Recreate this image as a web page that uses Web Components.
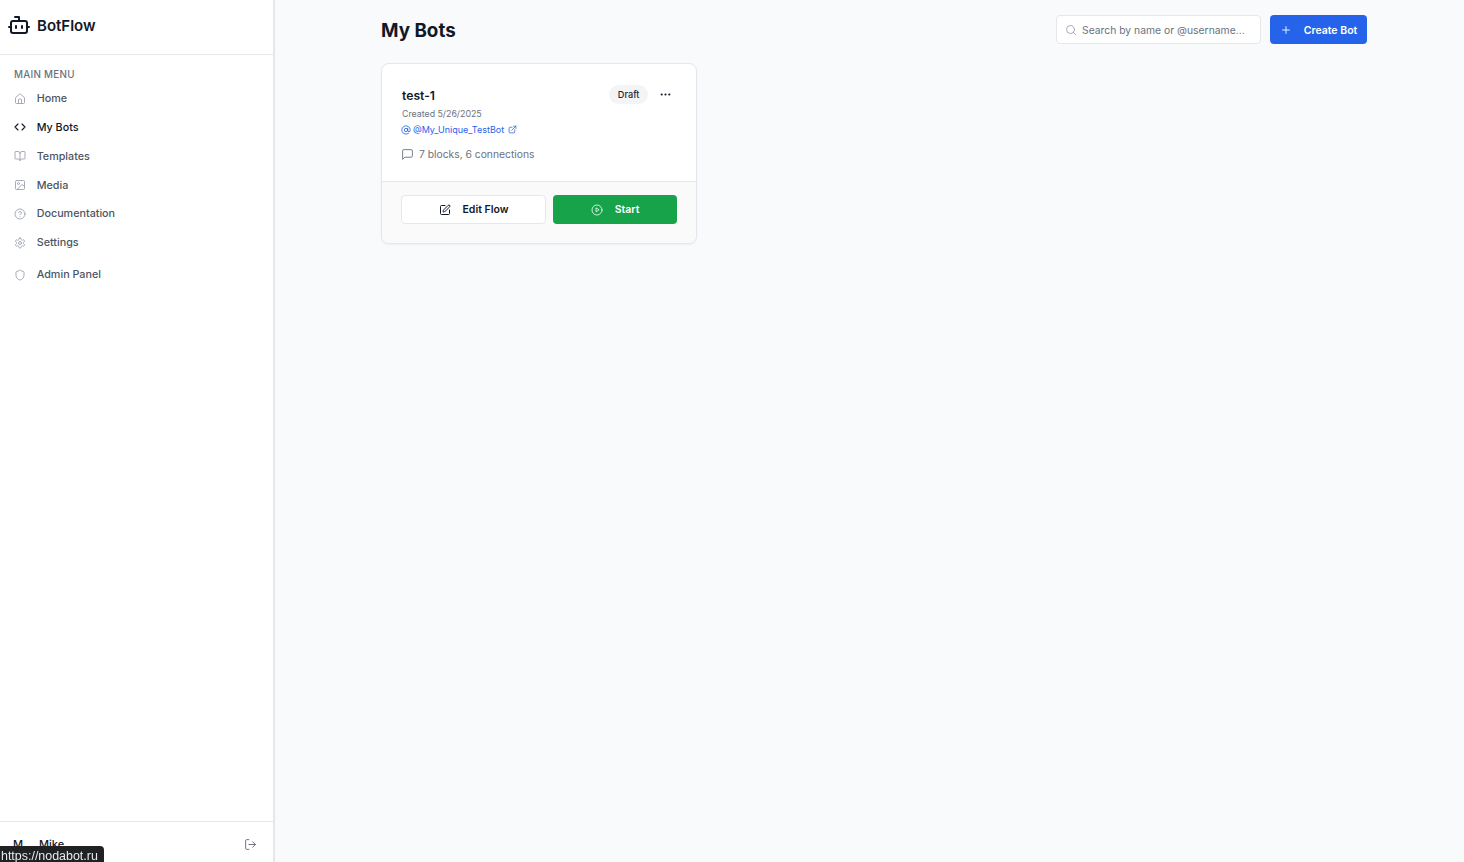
<!DOCTYPE html>
<html lang="en">
<head>
<meta charset="utf-8">
<title>My Bots - BotFlow</title>
<style>
  html, body { margin: 0; height: 100%; }
  body { font-family: Inter, "Noto Sans", sans-serif; background: #f9fafb; overflow: hidden; }
</style>
</head>
<body>
<app-shell>
  <side-bar slot="side"></side-bar>
  <bots-page slot="main"></bots-page>
</app-shell>
<status-tip>https://nodabot.ru</status-tip>

<script>
const icons = {
  bot: '<path d="M12 8V4H8"/><rect x="4" y="8" width="16" height="12" rx="2"/><path d="M2 14h2M20 14h2M15 13v2M9 13v2"/>',
  home: '<path d="M15 21v-8a1 1 0 0 0-1-1h-4a1 1 0 0 0-1 1v8"/><path d="M3 10a2 2 0 0 1 .709-1.528l7-5.999a2 2 0 0 1 2.582 0l7 5.999A2 2 0 0 1 21 10v9a2 2 0 0 1-2 2H5a2 2 0 0 1-2-2z"/>',
  code: '<path d="m16 18 6-6-6-6M8 6l-6 6 6 6"/>',
  book: '<path d="M12 7v14"/><path d="M3 18a1 1 0 0 1-1-1V4a1 1 0 0 1 1-1h5a4 4 0 0 1 4 4 4 4 0 0 1 4-4h5a1 1 0 0 1 1 1v13a1 1 0 0 1-1 1h-6a3 3 0 0 0-3 3 3 3 0 0 0-3-3z"/>',
  image: '<rect x="3" y="3" width="18" height="18" rx="2"/><circle cx="9" cy="9" r="2"/><path d="m21 15-3.086-3.086a2 2 0 0 0-2.828 0L6 21"/>',
  help: '<circle cx="12" cy="12" r="10"/><path d="M9.09 9a3 3 0 0 1 5.83 1c0 2-3 3-3 3M12 17h.01"/>',
  gear: '<path d="M12.22 2h-.44a2 2 0 0 0-2 2v.18a2 2 0 0 1-1 1.73l-.43.25a2 2 0 0 1-2 0l-.15-.08a2 2 0 0 0-2.73.73l-.22.38a2 2 0 0 0 .73 2.73l.15.1a2 2 0 0 1 1 1.72v.51a2 2 0 0 1-1 1.74l-.15.09a2 2 0 0 0-.73 2.73l.22.38a2 2 0 0 0 2.73.73l.15-.08a2 2 0 0 1 2 0l.43.25a2 2 0 0 1 1 1.73V20a2 2 0 0 0 2 2h.44a2 2 0 0 0 2-2v-.18a2 2 0 0 1 1-1.73l.43-.25a2 2 0 0 1 2 0l.15.08a2 2 0 0 0 2.73-.73l.22-.39a2 2 0 0 0-.73-2.73l-.15-.08a2 2 0 0 1-1-1.74v-.5a2 2 0 0 1 1-1.74l.15-.09a2 2 0 0 0 .73-2.73l-.22-.38a2 2 0 0 0-2.73-.73l-.15.08a2 2 0 0 1-2 0l-.43-.25a2 2 0 0 1-1-1.73V4a2 2 0 0 0-2-2z"/><circle cx="12" cy="12" r="3"/>',
  shield: '<path d="M20 13c0 5-3.5 7.5-7.66 8.95a1 1 0 0 1-.67-.01C7.5 20.5 4 18 4 13V6a1 1 0 0 1 1-1c2 0 4.5-1.2 6.24-2.72a1.17 1.17 0 0 1 1.52 0C14.51 3.81 17 5 19 5a1 1 0 0 1 1 1z"/>',
  logout: '<path d="M9 21H5a2 2 0 0 1-2-2V5a2 2 0 0 1 2-2h4"/><path d="m16 17 5-5-5-5M21 12H9"/>',
  search: '<circle cx="11" cy="11" r="8"/><path d="m21 21-4.3-4.3"/>',
  plus: '<path d="M5 12h14M12 5v14"/>',
  at: '<circle cx="12" cy="12" r="4"/><path d="M16 8v5a3 3 0 0 0 6 0v-1a10 10 0 1 0-4 8"/>',
  ext: '<path d="M15 3h6v6M10 14 21 3"/><path d="M18 13v6a2 2 0 0 1-2 2H5a2 2 0 0 1-2-2V8a2 2 0 0 1 2-2h6"/>',
  chat: '<path d="M21 15a2 2 0 0 1-2 2H7l-4 4V5a2 2 0 0 1 2-2h14a2 2 0 0 1 2 2z"/>',
  dots: '<circle cx="12" cy="12" r="1"/><circle cx="19" cy="12" r="1"/><circle cx="5" cy="12" r="1"/>',
  edit: '<path d="M12 3H5a2 2 0 0 0-2 2v14a2 2 0 0 0 2 2h14a2 2 0 0 0 2-2v-7"/><path d="M18.375 2.625a1 1 0 0 1 3 3l-9.013 9.014a2 2 0 0 1-.853.505l-2.873.84a.5.5 0 0 1-.62-.62l.84-2.873a2 2 0 0 1 .506-.852z"/>',
  play: '<circle cx="12" cy="12" r="10"/><path d="M10 8.5v7l5.5-3.5z"/>'
};

class AppIcon extends HTMLElement {
  connectedCallback() {
    const size = this.getAttribute('size') || 13;
    const sw = this.getAttribute('stroke') || 2;
    this.attachShadow({ mode: 'open' });
    this.shadowRoot.innerHTML = `
      <style>
        :host { display: inline-flex; flex: none; }
        svg { display: block; fill: none; stroke: currentColor; stroke-linecap: round; stroke-linejoin: round; }
      </style>
      <svg width="${size}" height="${size}" viewBox="0 0 24 24" stroke-width="${sw}">${icons[this.getAttribute('name')]}</svg>`;
  }
}
customElements.define('app-icon', AppIcon);

class AppShell extends HTMLElement {
  connectedCallback() {
    this.attachShadow({ mode: 'open' });
    this.shadowRoot.innerHTML = `
      <style>
        :host { display: flex; height: 862px; overflow: hidden; }
        .side { flex: none; width: 275px; display: flex; }
        .main { flex: 1; min-width: 0; }
      </style>
      <div class="side"><slot name="side"></slot></div>
      <div class="main"><slot name="main"></slot></div>`;
  }
}
customElements.define('app-shell', AppShell);

class NavItem extends HTMLElement {
  connectedCallback() {
    const active = this.hasAttribute('active');
    this.attachShadow({ mode: 'open' });
    this.shadowRoot.innerHTML = `
      <style>
        :host { display: flex; align-items: center; gap: 10.7px; height: 28.8px; padding-left: 14px; font-size: 10.75px; font-weight: 500;
                color: ${active ? '#111827' : '#4b5563'}; }
        app-icon { color: ${active ? '#111827' : '#9ca3af'}; }
      </style>
      <app-icon name="${this.getAttribute('icon')}" size="12" stroke="${active ? 2.2 : 1.8}"></app-icon>
      <slot></slot>`;
  }
}
customElements.define('nav-item', NavItem);

class SideBar extends HTMLElement {
  connectedCallback() {
    this.attachShadow({ mode: 'open' });
    this.shadowRoot.innerHTML = `
      <style>
        :host { display: flex; flex-direction: column; width: 273px; height: 862px; background: #fff; border-right: 2px solid #e5e7eb; }
        .brand { height: 55px; flex: none; display: flex; align-items: center; gap: 6px; padding: 0 7px; box-sizing: border-box; border-bottom: 1px solid #e5e7eb;
                 font-size: 15px; font-weight: 600; color: #111827; }
        .brand span { position: relative; top: -1.5px; }
        .brand app-icon { position: relative; top: -2px; }
        .label { margin: 14px 0 0 14px; font-size: 9.8px; line-height: 12px; font-weight: 500; letter-spacing: .3px; color: #6b7280; }
        nav { padding-top: 3.3px; flex: 1; }
        .admin { margin-top: 3.2px; }
        .user { height: 41px; box-sizing: border-box; padding: 4px 16px 0 13px; flex: none; border-top: 1px solid #e5e7eb; display: flex; align-items: center; font-size: 11px; font-weight: 500; color: #111827; }
        .user b { font-weight: 500; width: 26px; }
        .user span { flex: 1; }
        .user app-icon { color: #6b7280; }
      </style>
      <div class="brand"><app-icon name="bot" size="24" stroke="2"></app-icon><span>BotFlow</span></div>
      <div class="label">MAIN MENU</div>
      <nav>
        <nav-item icon="home">Home</nav-item>
        <nav-item icon="code" active>My Bots</nav-item>
        <nav-item icon="book">Templates</nav-item>
        <nav-item icon="image">Media</nav-item>
        <nav-item icon="help">Documentation</nav-item>
        <nav-item icon="gear">Settings</nav-item>
        <nav-item icon="shield" class="admin">Admin Panel</nav-item>
      </nav>
      <div class="user"><b>M</b><span>Mike</span><app-icon name="logout" size="13" stroke="1.8"></app-icon></div>`;
  }
}
customElements.define('side-bar', SideBar);

class BotCard extends HTMLElement {
  connectedCallback() {
    this.attachShadow({ mode: 'open' });
    this.shadowRoot.innerHTML = `
      <style>
        :host { display: block; width: 316px; box-sizing: border-box; background: #fff; border: 1px solid #e5e7eb; border-radius: 8px; overflow: hidden;
                box-shadow: 0 1px 2px rgba(0,0,0,.05); }
        .body { height: 118px; box-sizing: border-box; padding: 20px 19px 0 20px; border-bottom: 1px solid #e5e7eb; }
        .top { display: flex; justify-content: space-between; align-items: center; height: 22px; }
        h3 { margin: 1px 0 0; font-size: 12.2px; line-height: 22px; font-weight: 600; color: #111827; }
        .right { display: flex; align-items: center; gap: 11px; padding-right: 5px; position: relative; top: -1px; }
        .badge { height: 19px; padding: 0 8.5px; border-radius: 10px; background: #f3f4f6; display: flex; align-items: center; font-size: 9.2px; font-weight: 500; color: #1f2937; }
        .right app-icon { color: #111827; }
        .date { margin-top: 1px; font-size: 8.8px; line-height: 13px; color: #6b7280; }
        .user { margin-top: 3px; margin-left: -1px; display: flex; align-items: center; gap: 2px; font-size: 9px; line-height: 13px; color: #2563eb; }
        .user app-icon + span + app-icon { margin-left: 2px; }
        .stats { margin-top: 11px; margin-left: -1px; display: flex; align-items: center; gap: 5px; font-size: 10.3px; line-height: 15px; color: #6b7280; }
        .foot { height: 61px; box-sizing: border-box; background: #fafafa; padding: 13px 19px 0; display: flex; gap: 7px; }
        .btn { height: 29px; box-sizing: border-box; border-radius: 4px; display: flex; align-items: center; justify-content: center; gap: 12px; font-size: 10.5px; font-weight: 600; }
        .edit { width: 145px; background: #fff; border: 1px solid #e5e7eb; color: #111827; }
        .start { width: 124px; background: #16a34a; color: #fff; }
      </style>
      <div class="body">
        <div class="top">
          <h3>test-1</h3>
          <div class="right"><span class="badge">Draft</span><app-icon name="dots" size="13" stroke="2"></app-icon></div>
        </div>
        <div class="date">Created 5/26/2025</div>
        <div class="user"><app-icon name="at" size="10"></app-icon><span>@My_Unique_TestBot</span><app-icon name="ext" size="9"></app-icon></div>
        <div class="stats"><app-icon name="chat" size="13" stroke="1.7"></app-icon><span>7 blocks, 6 connections</span></div>
      </div>
      <div class="foot">
        <div class="btn edit"><app-icon name="edit" size="12"></app-icon><span>Edit Flow</span></div>
        <div class="btn start"><app-icon name="play" size="12" stroke="1.6"></app-icon><span>Start</span></div>
      </div>`;
  }
}
customElements.define('bot-card', BotCard);

class BotsPage extends HTMLElement {
  connectedCallback() {
    this.attachShadow({ mode: 'open' });
    this.shadowRoot.innerHTML = `
      <style>
        :host { display: block; padding: 15px 97px 0 106px; }
        header { display: flex; align-items: center; height: 29px; gap: 9px; margin-bottom: 19px; }
        h1 { margin: 2px auto 0 0; font-size: 18.8px; font-weight: 700; color: #111827; line-height: 30px; }
        .search { width: 205px; height: 29px; box-sizing: border-box; background: #fff; border: 1px solid #e5e7eb; border-radius: 4px; display: flex; align-items: center; gap: 5px; padding-left: 8px;
                  font-size: 10.35px; color: #6b7280; white-space: nowrap; }
        .search app-icon { color: #9ca3af; }
        .create { width: 97px; height: 29px; box-sizing: border-box; background: #2563eb; border-radius: 4px; display: flex; align-items: center; justify-content: center; gap: 12px; color: #fff; font-size: 10.5px; font-weight: 600; }
        .create span { position: relative; top: .5px; }
      </style>
      <header>
        <h1>My Bots</h1>
        <div class="search"><app-icon name="search" size="12" stroke="1.8"></app-icon><span>Search by name or @username...</span></div>
        <div class="create"><app-icon name="plus" size="12" stroke="1.7"></app-icon><span>Create Bot</span></div>
      </header>
      <bot-card></bot-card>`;
  }
}
customElements.define('bots-page', BotsPage);

class StatusTip extends HTMLElement {
  connectedCallback() {
    this.attachShadow({ mode: 'open' });
    this.shadowRoot.innerHTML = `
      <style>
        :host { position: fixed; left: 0; bottom: 0; box-sizing: border-box; height: 16px; width: 104px; padding: 2px 0 0 1px; background: #202124; border-top-right-radius: 4px;
                color: #e8eaed; font: 12.45px/16px "Liberation Sans", sans-serif; white-space: nowrap; }
      </style>
      <slot></slot>`;
  }
}
customElements.define('status-tip', StatusTip);
</script>
</body>
</html>
